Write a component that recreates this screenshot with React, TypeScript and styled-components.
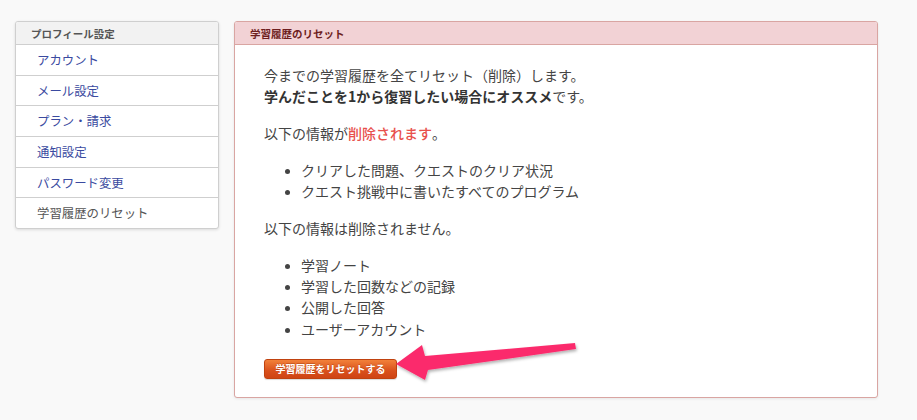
import React from "react";
import styled, { createGlobalStyle } from "styled-components";

const Global = createGlobalStyle`
  html, body { margin: 0; padding: 0; background: #f9f9f9; }
  body { font-family: "Noto Sans CJK JP", "Noto Sans", sans-serif; color: #444; }
  * { box-sizing: border-box; }
`;

const Page = styled.div`
  position: relative;
  width: 917px;
  height: 420px;
  display: flex;
  align-items: flex-start;
  gap: 15px;
  padding: 21px 0 0 15px;
`;

const Sidebar = styled.nav`
  width: 204px;
  background: #fff;
  border: 1px solid #cfcfcf;
  border-radius: 3px;
  box-shadow: 0 1px 3px rgba(0, 0, 0, 0.12);
  overflow: hidden;
`;

const SideHeader = styled.div`
  height: 23px;
  background: #f2f2f2;
  border-bottom: 1px solid #cfcfcf;
  font-size: 10.5px;
  font-weight: 700;
  color: #555;
  padding-left: 15px;
  display: flex;
  align-items: center;
`;

const SideItem = styled.a<{ $current?: boolean }>`
  display: flex;
  align-items: center;
  height: 30.7px;
  padding-left: 21px;
  font-size: 12.4px;
  color: ${(p) => (p.$current ? "#555" : "#3a4aa0")};
  text-decoration: none;
  border-bottom: 1px solid #cfcfcf;
  &:last-child { border-bottom: none; height: 29.5px; }
`;

const Panel = styled.section`
  width: 644px;
  background: #fff;
  border: 1px solid #d9a5a2;
  border-radius: 3px;
  box-shadow: 0 1px 3px rgba(0, 0, 0, 0.08);
  overflow: hidden;
`;

const PanelHeader = styled.div`
  height: 23px;
  background: #f2d2d5;
  border-bottom: 1px solid #d9a5a2;
  font-size: 10.5px;
  font-weight: 700;
  color: #6e1e1e;
  padding-left: 15px;
  display: flex;
  align-items: center;
`;

const PanelBody = styled.div`
  padding: 20px 29px 18px 29px;
  font-size: 14px;
  line-height: 21.3px;
  color: #444;
`;

const Para = styled.p`
  margin: 0 0 15.5px 0;
`;

const Strong = styled.strong`
  font-weight: 700;
  color: #333;
`;

const Danger = styled.span`
  color: #e8504c;
  font-weight: 500;
`;

const List = styled.ul`
  margin: 0 0 15.5px 0;
  padding-left: 37px;
  li::marker { font-size: 12px; }
`;

const ResetButton = styled.button`
  display: block;
  margin-top: 19px;
  width: 133px;
  height: 20px;
  border: 1px solid #c0420f;
  border-radius: 3px;
  background: linear-gradient(to bottom, #f2813a, #d9501c 60%, #cf4414);
  color: #fff;
  font-family: "Noto Sans CJK JP", sans-serif;
  font-size: 10px;
  font-weight: 700;
  padding: 0;
  box-shadow: 0 1px 1px rgba(0, 0, 0, 0.15);
  text-shadow: 0 -1px 0 rgba(120, 30, 0, 0.3);
`;

const ArrowLayer = styled.svg`
  position: absolute;
  left: 0;
  top: 0;
  pointer-events: none;
`;

export default function App() {
  const items = ["アカウント", "メール設定", "プラン・請求", "通知設定", "パスワード変更"];
  return (
    <>
      <Global />
      <Page>
        <Sidebar>
          <SideHeader>プロフィール設定</SideHeader>
          {items.map((t) => (
            <SideItem key={t} href="#">{t}</SideItem>
          ))}
          <SideItem $current>学習履歴のリセット</SideItem>
        </Sidebar>
        <Panel>
          <PanelHeader>学習履歴のリセット</PanelHeader>
          <PanelBody>
            <Para>
              今までの学習履歴を全てリセット（削除）します。
              <br />
              <Strong>学んだことを1から復習したい場合にオススメ</Strong>です。
            </Para>
            <Para>
              以下の情報が<Danger>削除されます</Danger>。
            </Para>
            <List>
              <li>クリアした問題、クエストのクリア状況</li>
              <li>クエスト挑戦中に書いたすべてのプログラム</li>
            </List>
            <Para>以下の情報は削除されません。</Para>
            <List>
              <li>学習ノート</li>
              <li>学習した回数などの記録</li>
              <li>公開した回答</li>
              <li>ユーザーアカウント</li>
            </List>
            <ResetButton>学習履歴をリセットする</ResetButton>
          </PanelBody>
        </Panel>
        <ArrowLayer width="917" height="420" viewBox="0 0 917 420">
          <defs>
            <filter id="sh" x="-10%" y="-50%" width="120%" height="200%">
              <feDropShadow dx="1" dy="2" stdDeviation="1.5" floodColor="#000" floodOpacity="0.3" />
            </filter>
          </defs>
          <polygon
            points="396,364 422,345 425,356 575,343 576,349 428,370 425,380"
            fill="#fb2c6c"
            filter="url(#sh)"
          />
        </ArrowLayer>
      </Page>
    </>
  );
}
